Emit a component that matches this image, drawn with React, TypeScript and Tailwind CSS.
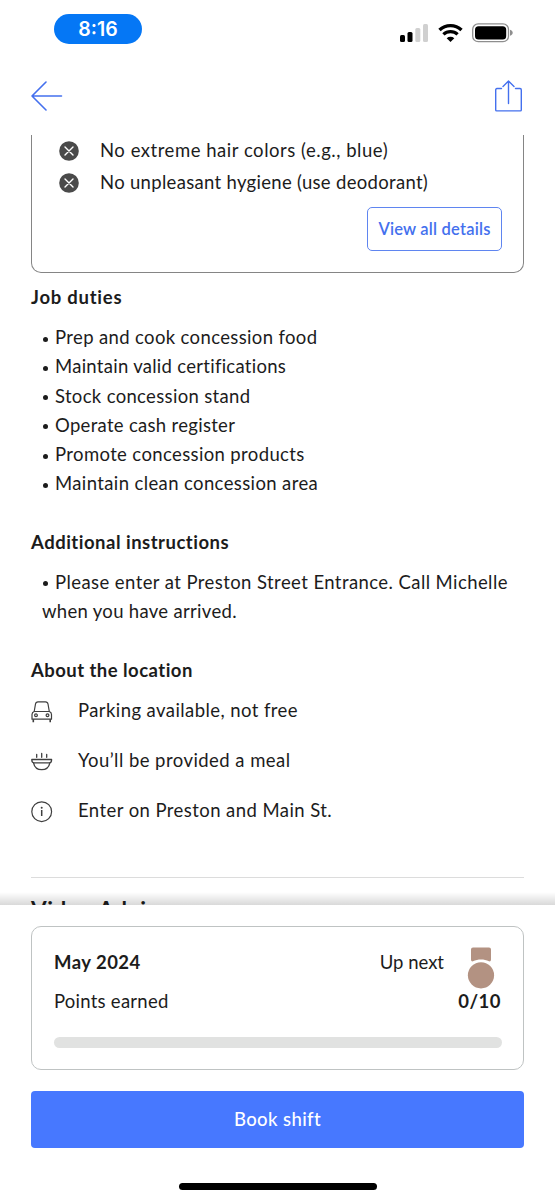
import type { ReactNode } from "react";

const requirements = [
  { text: "No extreme hair colors (e.g., blue)", tracking: "tracking-[0.53px]" },
  { text: "No unpleasant hygiene (use deodorant)", tracking: "tracking-[0.31px]" },
];

const duties = [
  { text: "Prep and cook concession food", tracking: "tracking-[0.36px]" },
  { text: "Maintain valid certifications", tracking: "tracking-[0.28px]" },
  { text: "Stock concession stand", tracking: "tracking-[0.33px]" },
  { text: "Operate cash register", tracking: "tracking-[0.3px]" },
  { text: "Promote concession products", tracking: "tracking-[0.37px]" },
  { text: "Maintain clean concession area", tracking: "tracking-[0.38px]" },
];

const locationInfo = [
  { icon: <CarIcon />, text: "Parking available, not free", tracking: "tracking-[0.42px]" },
  { icon: <MealIcon />, text: "You’ll be provided a meal", tracking: "tracking-[0.45px]" },
  { icon: <InfoIcon />, text: "Enter on Preston and Main St.", tracking: "tracking-[0.43px]" },
];

function CarIcon() {
  return (
    <svg width="22" height="22" viewBox="0 0 22 22" fill="none" stroke="#3f3f3f" strokeWidth="1.2" strokeLinejoin="round">
      <path d="M3.2 10.5 4.5 3C4.8 1.3 5.4.8 7 .8h7.500c1.600 0 2.200.5 2.500 2.200l1.300 7.500" />
      <path d="M3.200 10.500h15.100c1.400.5 2.200 1.400 2.200 3v4.700H1v-4.700c0-1.600.8-2.500 2.200-3Z" />
      <circle cx="5" cy="14.300" r="1.400" />
      <circle cx="16.500" cy="14.300" r="1.400" />
      <path d="M2.300 18.200v3M19.200 18.200v3" strokeWidth="1.600" />
    </svg>
  );
}

function MealIcon() {
  return (
    <svg width="22" height="22" viewBox="0 0 22 22" fill="none" stroke="#3f3f3f" strokeWidth="1.300" strokeLinecap="round" strokeLinejoin="round">
      <path d="M.8 8.500h19.800c0 2.200-.6 3.300-2 3.300H2.800c-1.400 0-2-1.100-2-3.300Z" />
      <path d="M2.500 11.800c1 4.500 4.300 6.900 8.200 6.900s7.200-2.400 8.200-6.900" />
      <path d="M5.700 3.500v2.800M10.700 2.500v3.800M15.700 3.500v2.800" />
    </svg>
  );
}

function InfoIcon() {
  return (
    <svg width="22" height="22" viewBox="0 0 22 22" fill="none" stroke="#3f3f3f">
      <circle cx="10.700" cy="10.700" r="9.900" strokeWidth="1.200" />
      <path d="M10.700 9v6" strokeWidth="1.500" />
      <circle cx="10.700" cy="6.700" r="1" fill="#3f3f3f" stroke="none" />
    </svg>
  );
}

function CrossIcon() {
  return (
    <svg width="20" height="20" viewBox="0 0 20 20" fill="none">
      <circle cx="10" cy="10" r="9.800" fill="#4a4a4a" />
      <path d="m6 6 8 8m0-8-8 8" stroke="#fff" strokeWidth="1.400" strokeLinecap="round" />
    </svg>
  );
}

function StatusIcons() {
  return (
    <div className="flex h-[20px] items-center">
      <svg width="29" height="20" viewBox="0 0 29 20">
        <rect x="0" y="12" width="5" height="7" rx="1.500" fill="#000" />
        <rect x="7.500" y="9" width="5" height="10" rx="1.500" fill="#000" />
        <rect x="15.300" y="5" width="5" height="14" rx="1.500" fill="#d0d0d0" />
        <rect x="23" y="1" width="5" height="18" rx="1.500" fill="#d0d0d0" />
      </svg>
      <svg className="ml-[9px]" width="25" height="20" viewBox="0 0 25 20" fill="none" stroke="#000">
        <path d="M1.500 7a16 16 0 0 1 22 0" strokeWidth="3.400" />
        <path d="M5.400 11.400a10.300 10.300 0 0 1 14.200 0" strokeWidth="3.200" />
        <path d="M12.500 19 8.700 15.200a5.600 5.600 0 0 1 7.600 0Z" fill="#000" stroke="none" />
      </svg>
      <svg className="ml-[9px]" width="41" height="20" viewBox="0 0 41 20">
        <rect x="0.700" y="0.900" width="35.800" height="17.800" rx="5.500" fill="none" stroke="#8e8e8e" strokeWidth="1.300" />
        <rect x="3" y="3.200" width="31.200" height="13.200" rx="3.500" fill="#000" />
        <path d="M38 6.800c1.800.6 2.700 1.700 2.700 3s-.9 2.400-2.700 3Z" fill="#8e8e8e" />
      </svg>
    </div>
  );
}

function Medal() {
  return (
    <svg width="28" height="42" viewBox="0 0 28 42" fill="#b39282">
      <path d="M6 .5h16a2 2 0 0 1 2 2v10c0 1.500-1 2.200-2 1.800-5-2.400-11-2.400-16 0-1 .4-2-.3-2-1.800v-10a2 2 0 0 1 2-2Z" />
      <circle cx="14" cy="28.300" r="13.100" />
    </svg>
  );
}

function Heading({ children, className }: { children: ReactNode; className: string }) {
  return <h2 className={`h-[24px] leading-[22px] font-bold whitespace-nowrap ${className}`}>{children}</h2>;
}

function Bullet() {
  return <span className="mt-[3px] h-[5px] w-[5px] rounded-full bg-[#1c1c1c]" />;
}

export default function App() {
  return (
    <main className="flex h-[1200px] w-[555px] flex-col overflow-hidden bg-white font-['Lato',sans-serif] text-[18.5px] text-[#1c1c1c]">
      {/* Status bar */}
      <div className="flex h-[58px] shrink-0 items-start justify-between pt-[14px] pr-[42px] pl-[54px]">
        <div className="flex h-[30px] w-[88px] items-center justify-center rounded-full bg-[#0577f5] pt-[1px] font-['Inter',sans-serif] text-[19.5px] font-semibold text-white">
          8:16
        </div>
        <div className="pt-[9px]">
          <StatusIcons />
        </div>
      </div>

      {/* Navigation */}
      <header className="flex h-[77px] shrink-0 items-start justify-between pt-[22px] pr-[32px] pl-[31px] text-[#4470ee]">
        <button aria-label="Back">
          <svg width="32" height="32" viewBox="0 0 32 32" fill="none" stroke="currentColor" strokeWidth="1.600" strokeLinecap="round" strokeLinejoin="round">
            <path d="M15 2 1 16l14 14M1 16h29.500" />
          </svg>
        </button>
        <button aria-label="Share">
          <svg width="28" height="32" viewBox="0 0 28 32" fill="none" stroke="currentColor" strokeWidth="1.400" strokeLinecap="round" strokeLinejoin="round">
            <path d="M13.500 23.500V1M8 6.500 13.500 1 19 6.500M6.500 8.500H2c-.9 0-1.300.5-1.300 1.400v20c0 .7.300 1 1 1h23.600c.7 0 1-.3 1-1v-20c0-.9-.4-1.400-1.300-1.400h-4.500" />
          </svg>
        </button>
      </header>

      {/* Scrolling job details */}
      <section className="h-[770px] shrink-0 overflow-hidden px-[31px]">
        <div className="h-[138px] rounded-b-[10px] border border-t-0 border-[#858585] pr-[21px] pl-[27px]">
          {requirements.map((r) => (
            <div key={r.text} className="flex h-[32px] items-center">
              <CrossIcon />
              <span className={`ml-[21px] whitespace-nowrap ${r.tracking}`}>{r.text}</span>
            </div>
          ))}
          <div className="mt-[8px] flex justify-end">
            <button className="h-[44px] w-[135px] rounded-[5px] border-[1.5px] border-[#5f85f0] pt-[1px] text-[16.5px] font-semibold whitespace-nowrap text-[#4470ee] tracking-[0.2px]">
              View all details
            </button>
          </div>
        </div>

        <Heading className="mt-[13px] tracking-[0.75px]">Job duties</Heading>
        <ul className="mt-[13px] pl-[12px] leading-[29.25px]">
          {duties.map((d) => (
            <li key={d.text} className="flex items-center">
              <Bullet />
              <span className={`ml-[7px] whitespace-nowrap ${d.tracking}`}>{d.text}</span>
            </li>
          ))}
        </ul>

        <Heading className="mt-[32px] tracking-[0.5px]">Additional instructions</Heading>
        <div className="mt-[13px] pl-[11px] leading-[29.25px]">
          <div className="flex items-center pl-[1px]">
            <Bullet />
            <span className="ml-[7px] whitespace-nowrap tracking-[0.42px]">Please enter at Preston Street Entrance. Call Michelle</span>
          </div>
          <p className="whitespace-nowrap tracking-[0.31px]">when you have arrived.</p>
        </div>

        <Heading className="mt-[33px] tracking-[0.46px]">About the location</Heading>
        <div className="mt-[3px] h-[192px] border-b border-[#dcdcdc]">
          {locationInfo.map((info) => (
            <div key={info.text} className="flex h-[50px] items-center">
              <span className="pt-[2px]">{info.icon}</span>
              <span className={`ml-[25px] whitespace-nowrap ${info.tracking}`}>{info.text}</span>
            </div>
          ))}
        </div>
        <h2 className="mt-[18px] text-[22.5px] leading-[28px] font-bold tracking-[0.6px] whitespace-nowrap">Video Advice</h2>
      </section>

      {/* Booking panel */}
      <footer className="relative h-[295px] shrink-0 bg-white px-[31px] pt-[21px]">
        <div className="absolute inset-x-0 -top-[13px] h-[13px] bg-linear-to-b from-black/0 to-black/15" />
        <div className="h-[144px] rounded-[10px] border-[1.5px] border-[#bfc3c3] px-[22px] pt-[20px]">
          <div className="flex h-[42px] items-start">
            <h3 className="pt-[2px] leading-[26px] font-bold tracking-[0.45px]">May 2024</h3>
            <span className="ml-auto pt-[2px] leading-[26px]">Up next</span>
            <div className="mr-[6px] ml-[23px]">
              <Medal />
            </div>
          </div>
          <div className="flex h-[26px] items-center justify-between">
            <span className="tracking-[0.25px]">Points earned</span>
            <span className="font-bold tracking-[0.5px]">0/10</span>
          </div>
          <div className="mt-[22px] -mr-[1px] h-[11px] rounded-full bg-[#e1e2e1]" />
        </div>
        <button className="mt-[21px] flex h-[57px] w-[493px] items-center justify-center rounded-[4px] bg-[#4778ff] font-medium tracking-[0.4px] text-white">
          Book shift
        </button>
        <div className="mx-auto mt-[35px] h-[7px] w-[198px] rounded-full bg-black" />
      </footer>
    </main>
  );
}
